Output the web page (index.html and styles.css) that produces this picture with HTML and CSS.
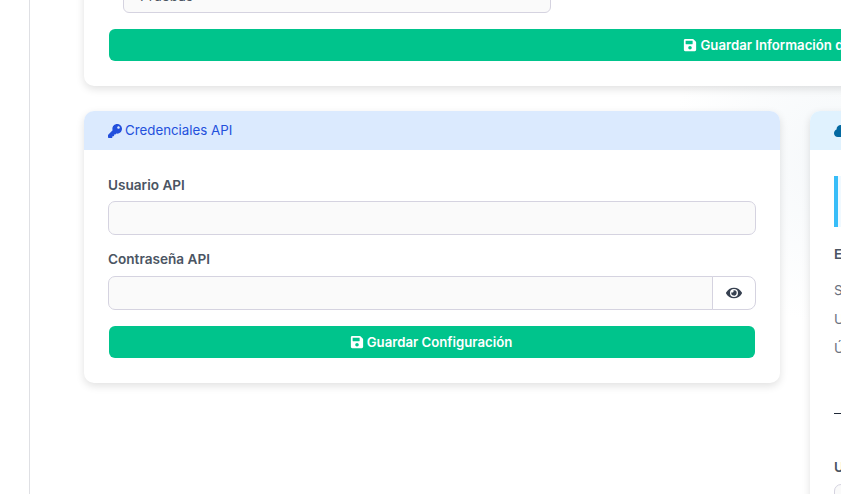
FILE: index.html
```html
<!DOCTYPE html>
<html lang="es">
<head>
<meta charset="utf-8">
<title>Configuración</title>
<link rel="stylesheet" href="styles.css">
</head>
<body>
<div class="shell">
  <aside class="sidebar"></aside>
  <main class="content">
    <section class="card card-wide">
      <div class="card-body">
        <div class="select">Pruebas</div>
        <button class="btn" type="button">
          <svg class="icon" viewBox="0 0 448 512"><path d="M433.941 129.941l-83.882-83.882A48 48 0 0 0 316.118 32H48C21.49 32 0 53.49 0 80v352c0 26.51 21.49 48 48 48h352c26.51 0 48-21.49 48-48V163.882a48 48 0 0 0-14.059-33.941zM224 416c-35.346 0-64-28.654-64-64 0-35.346 28.654-64 64-64s64 28.654 64 64c0 35.346-28.654 64-64 64zm96-304.52V212c0 6.627-5.373 12-12 12H76c-6.627 0-12-5.373-12-12V108c0-6.627 5.373-12 12-12h228.52c3.183 0 6.235 1.264 8.485 3.515l3.48 3.48A11.996 11.996 0 0 1 320 111.48z"/></svg>
          Guardar Información de la Empresa
        </button>
      </div>
    </section>

    <section class="card">
      <header class="card-head head-blue">
        <svg class="icon" viewBox="0 0 512 512"><path d="M512 176.001C512 273.203 433.202 352 336 352c-11.22 0-22.19-1.062-32.827-3.069l-24.012 27.014A23.999 23.999 0 0 1 261.223 384H224v40c0 13.255-10.745 24-24 24h-40v40c0 13.255-10.745 24-24 24H24c-13.255 0-24-10.745-24-24v-78.059c0-6.365 2.529-12.47 7.029-16.971l161.802-161.802C163.108 213.814 160 195.271 160 176 160 78.798 238.797.001 335.999 0 433.488-.001 512 78.511 512 176.001zM336 128c0 26.51 21.49 48 48 48s48-21.49 48-48-21.49-48-48-48-48 21.49-48 48z"/></svg>
        Credenciales API
      </header>
      <div class="card-body">
        <label class="label">Usuario API</label>
        <input class="input field" type="text">
        <label class="label">Contraseña API</label>
        <div class="input-group">
          <input class="input" type="password">
          <span class="addon">
            <svg class="icon-eye" viewBox="0 0 576 512"><path d="M572.52 241.4C518.29 135.59 410.93 64 288 64S57.68 135.64 3.48 241.41a32.35 32.35 0 0 0 0 29.19C57.71 376.41 165.07 448 288 448s230.32-71.64 284.52-177.41a32.35 32.35 0 0 0 0-29.19zM288 400a144 144 0 1 1 144-144 143.93 143.93 0 0 1-144 144zm0-240a95.31 95.31 0 0 0-25.31 3.79 47.85 47.85 0 0 1-66.9 66.9A95.78 95.78 0 1 0 288 160z"/></svg>
          </span>
        </div>
        <button class="btn" type="button">
          <svg class="icon" viewBox="0 0 448 512"><path d="M433.941 129.941l-83.882-83.882A48 48 0 0 0 316.118 32H48C21.49 32 0 53.49 0 80v352c0 26.51 21.49 48 48 48h352c26.51 0 48-21.49 48-48V163.882a48 48 0 0 0-14.059-33.941zM224 416c-35.346 0-64-28.654-64-64 0-35.346 28.654-64 64-64s64 28.654 64 64c0 35.346-28.654 64-64 64zm96-304.52V212c0 6.627-5.373 12-12 12H76c-6.627 0-12-5.373-12-12V108c0-6.627 5.373-12 12-12h228.52c3.183 0 6.235 1.264 8.485 3.515l3.48 3.48A11.996 11.996 0 0 1 320 111.48z"/></svg>
          Guardar Configuración
        </button>
      </div>
    </section>

    <section class="card card-tall">
      <header class="card-head head-sky">
        <svg class="icon icon-cloud" viewBox="0 0 640 512"><path d="M537.6 226.6c4.1-10.7 6.4-22.4 6.4-34.6 0-53-43-96-96-96-19.7 0-38.1 6-53.3 16.2C367 64.2 315.3 32 256 32c-88.4 0-160 71.6-160 160 0 2.7.1 5.4.2 8.1C40.2 219.8 0 273.2 0 336c0 79.5 64.5 144 144 144h368c70.7 0 128-57.3 128-128 0-61.9-44-113.6-102.4-125.4z"/></svg>
        Servicio en la nube
      </header>
      <div class="card-body">
        <div class="alert"></div>
        <h3 class="status-title">Estado del servicio</h3>
        <p class="status-line">Servidor: activo</p>
        <p class="status-line">Usuario: configurado</p>
        <p class="status-line">Última sincronización: hoy</p>
        <hr class="rule">
        <label class="label">Usuario</label>
        <input class="input" type="text">
      </div>
    </section>
  </main>
</div>
</body>
</html>
```
FILE: styles.css
```css
* { box-sizing: border-box; }

html, body {
  margin: 0;
  height: 100%;
  overflow: hidden;
  background: #fff;
}

body {
  font-family: Inter, "Liberation Sans", sans-serif;
  font-size: 13.6px;
  line-height: 21px;
  color: #4b5563;
}

.shell {
  display: flex;
  height: 494px;
  overflow: hidden;
}

.sidebar {
  flex: 0 0 30px;
  background: #fff;
  border-right: 1px solid #dfe0e4;
  box-shadow: 1px 0 1px rgba(0, 0, 0, 0.06);
}

.content {
  flex: 1;
  min-width: 0;
  display: grid;
  grid-template-columns: 696px 716px;
  grid-auto-rows: min-content;
  column-gap: 30px;
  row-gap: 25px;
  align-items: start;
  padding-left: 54px;
  margin-top: -45px;
  background:
    radial-gradient(circle at 810px 200px, #f5f8fa 0, rgba(246, 248, 251, 0) 170px),
    #fff;
}

.card {
  background: #fff;
  border-radius: 10px;
  box-shadow: 0 3px 8px rgba(0, 0, 0, 0.12);
  overflow: hidden;
}

.card-wide { grid-column: 1 / 3; }

.card-body { padding: 25px 24px 24px; }

.card-wide .card-body { padding-top: 24px; }

.card-head {
  display: flex;
  align-items: center;
  gap: 3px;
  height: 39px;
  padding: 0 24px;
  font-size: 13.3px;
}

.head-blue { background: #dbeafe; color: #2350dc; }
.head-sky { background: #e0f2fe; color: #0369a1; }

.icon { width: 14px; height: 14px; fill: currentColor; flex: none; }
.icon-cloud { width: 17px; }

.select {
  height: 34px;
  margin: 0 0 15px 15px;
  width: 428px;
  padding: 6px 16px;
  background: #fafafa;
  border: 1px solid #d5d3e0;
  border-radius: 6px;
  color: #4b5563;
}

.label {
  display: block;
  margin-bottom: 6px;
  font-weight: 600;
  color: #4b5563;
}

.label:first-child { margin-bottom: 5px; }

.input {
  display: block;
  width: 100%;
  height: 34px;
  padding: 0 12px;
  background: #fafafa;
  border: 1px solid #d5d3e0;
  border-radius: 7px;
  font: inherit;
  outline: none;
}

.field { margin-bottom: 14px; }

.input-group {
  display: flex;
  margin-bottom: 15px;
}

.input-group .input {
  flex: 1;
  min-width: 0;
  border-radius: 7px 0 0 7px;
}

.addon {
  flex: 0 0 44px;
  display: flex;
  align-items: center;
  justify-content: center;
  margin-left: -1px;
  background: #fff;
  border: 1px solid #d5d3e0;
  border-radius: 0 8px 8px 0;
  color: #374151;
}

.icon-eye { width: 16px; height: 16px; fill: #374151; }

.btn {
  display: flex;
  align-items: center;
  justify-content: center;
  gap: 3px;
  width: 100%;
  height: 34px;
  padding: 0 2px 0 0;
  border: 1px solid transparent;
  background: #00c48c padding-box;
  border-radius: 7px;
  color: #fff;
  font: 600 13.2px/20px Inter, "Liberation Sans", sans-serif;
}

.card-tall { height: 500px; }

.alert {
  height: 51px;
  margin: 1px 0 17px;
  background: #f0f9ff;
  border-left: 4px solid #38bdf8;
}

.status-title {
  margin: 0 0 15px;
  font-size: 13.6px;
  line-height: 21px;
  font-weight: 600;
  color: #4b5563;
}

.status-line {
  margin: 0 0 7.75px;
  color: #6b7280;
}

.rule {
  margin: 54px 0 43px;
  border: 0;
  border-top: 1px solid #1f2937;
}
```
